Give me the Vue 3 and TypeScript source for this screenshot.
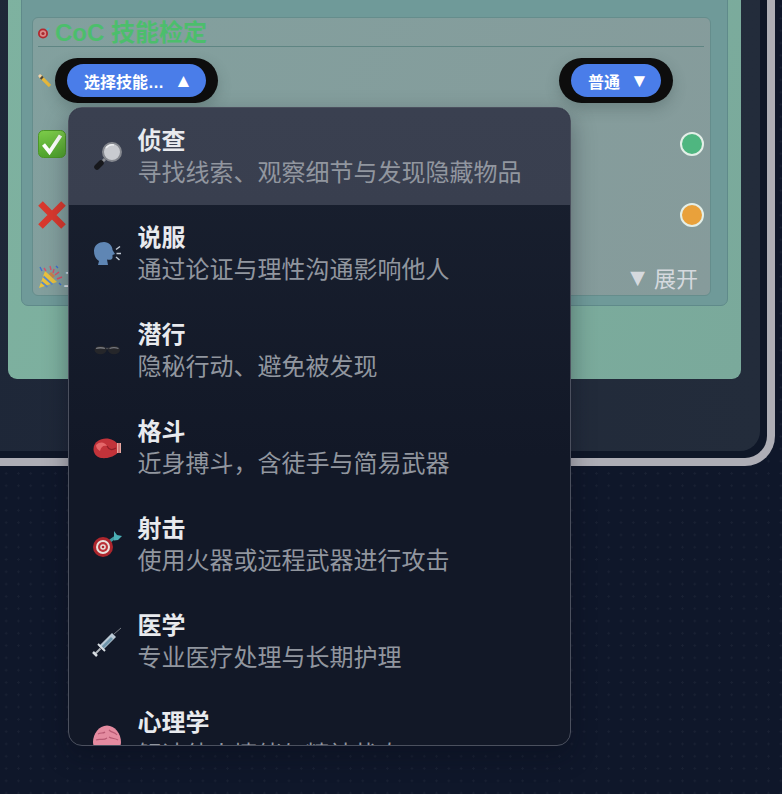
<script setup lang="ts">
interface Skill {
  key: string;
  name: string;
  desc: string;
}

// Skill list shown in the open dropdown
const skills: Skill[] = [
  { key: 'search', name: '侦查', desc: '寻找线索、观察细节与发现隐藏物品' },
  { key: 'talk', name: '说服', desc: '通过论证与理性沟通影响他人' },
  { key: 'stealth', name: '潜行', desc: '隐秘行动、避免被发现' },
  { key: 'fight', name: '格斗', desc: '近身搏斗，含徒手与简易武器' },
  { key: 'shoot', name: '射击', desc: '使用火器或远程武器进行攻击' },
  { key: 'medic', name: '医学', desc: '专业医疗处理与长期护理' },
  { key: 'mind', name: '心理学', desc: '解读他人情绪与精神状态' },
];

const activeKey = 'search';
</script>

<template>
  <div class="page">
    <div class="frame">
      <div class="panel">
        <div class="card">
          <div class="well">
            <section class="check-box">
              <h2 class="title-row">
                <svg class="title-icon" viewBox="0 0 12 14">
                  <path d="M5 8.500L11 3" stroke="#58b4c4" stroke-width="1.600" />
                  <circle cx="5" cy="8.500" r="5" fill="#b3282f" />
                  <circle cx="5" cy="8.500" r="3.200" fill="#d98a88" />
                  <circle cx="5" cy="8.500" r="1.600" fill="#a82a30" />
                </svg>
                <span>CoC 技能检定</span>
              </h2>

              <div class="select-row">
                <svg class="pencil" viewBox="0 0 13 13">
                  <path d="M2 2L12 12" stroke="#e9b93a" stroke-width="3.200" />
                  <path d="M1 1L3 3" stroke="#f0d2ad" stroke-width="3" />
                  <path d="M3 3L4.500 4.500" stroke="#4a4640" stroke-width="3.200" />
                </svg>
                <div class="select-wrap">
                  <div class="pill-ring">
                    <button class="pill pill-skill">
                      <span>选择技能…</span>
                      <span class="arrow">▲</span>
                    </button>
                  </div>

                  <div class="dropdown">
                    <div
                      v-for="skill in skills"
                      :key="skill.key"
                      class="option"
                      :class="{ active: skill.key === activeKey }"
                    >
                      <svg class="option-icon" viewBox="0 0 30 30">
                        <template v-if="skill.key === 'search'">
                          <path d="M13 17L8 22" stroke="#8c8f95" stroke-width="3" />
                          <path d="M9 21L5 25" stroke="#17181c" stroke-width="5.500" stroke-linecap="round" />
                          <circle cx="20" cy="10" r="9" fill="#c9cbd0" stroke="#85888f" stroke-width="2" />
                          <path d="M14 6a8 8 0 0 1 8-3" fill="none" stroke="#eceef0" stroke-width="1.500" />
                        </template>
                        <template v-else-if="skill.key === 'talk'">
                          <path d="M2 12C2 6 7 3 12 3C17 3 20.500 7 20.500 11L23 15L20.500 16L20.500 19C20 21 17 21 15 20.500L16 26H6L7 22C4 20 2 17 2 12Z" fill="#5f86b4" />
                          <path d="M24 10.500L28 7.500M24.500 14.500L29 14.500M24 18L27.500 21" stroke="#bfc7d2" stroke-width="1.500" />
                        </template>
                        <template v-else-if="skill.key === 'stealth'">
                          <path d="M12 12.500H19" stroke="#4a4b50" stroke-width="1.500" />
                          <ellipse cx="8.500" cy="14" rx="6" ry="4.200" fill="#25262a" />
                          <ellipse cx="22" cy="14" rx="6" ry="4.200" fill="#25262a" />
                          <path d="M4 12.500C6 11.500 11 11.500 13 12.500M17.500 12.500C20 11.500 24 11.500 26.500 12.500" fill="none" stroke="#77797f" stroke-width="1.300" />
                        </template>
                        <template v-else-if="skill.key === 'fight'">
                          <path d="M1.500 16C1.500 9 8 5.500 14 5.500C19 5.500 24 8 25.500 11L25.500 20C20 25 14 25.500 9 25C4 24 1.500 20 1.500 16Z" fill="#c2333a" />
                          <path d="M4 12C8 8 13 9 15 13C11 12 9 14 8 18C6 17 4 15 4 12Z" fill="#e5686a" />
                          <path d="M15 13C17 17 20 17.500 24 15" fill="none" stroke="#8e1f27" stroke-width="1.200" />
                          <rect x="25" y="10" width="4" height="10" fill="#e8a7a0" />
                          <path d="M27 10V20" stroke="#b9494c" stroke-width="1" />
                        </template>
                        <template v-else-if="skill.key === 'shoot'">
                          <path d="M11 16L25 6" stroke="#3f9aa0" stroke-width="3" />
                          <path d="M22 1L25 5L30 6L26 10L22 10.500Z" fill="#4bb0b6" />
                          <circle cx="11" cy="17" r="10" fill="#ad262d" />
                          <circle cx="11" cy="17" r="7" fill="#e9e2dc" />
                          <circle cx="11" cy="17" r="5" fill="#bc3339" />
                          <circle cx="11" cy="17" r="2.800" fill="#e9e2dc" />
                          <circle cx="11" cy="17" r="1.300" fill="#ad262d" />
                        </template>
                        <template v-else-if="skill.key === 'medic'">
                          <path d="M22 7L29 1" stroke="#777c84" stroke-width="1" />
                          <path d="M7 19L20 6L24 10L11 23Z" fill="#b9c8d4" />
                          <path d="M9 20L19 10L21 12L11 22Z" fill="#6f95ab" />
                          <path d="M6 17L13 24" stroke="#d7dde2" stroke-width="2" />
                          <path d="M8.500 21.500L3 27" stroke="#aeb4ba" stroke-width="2" />
                          <path d="M1 25L5 29" stroke="#d7dde2" stroke-width="2.500" />
                        </template>
                        <template v-else>
                          <path d="M1 18C1 10 7 1.500 15 1.500C23 1.500 29 10 29 18C29 25 23 28 15 28C7 28 1 25 1 18Z" fill="#e48ba0" />
                          <path d="M6 10C9 8 11 10 13 8M17 6C20 9 23 8 25 11M4 16C8 14 11 17 15 14M17 13C20 15 23 14 26 16" fill="none" stroke="#b95a74" stroke-width="1.200" />
                        </template>
                      </svg>
                      <div class="option-text">
                        <div class="option-name">{{ skill.name }}</div>
                        <div class="option-desc">{{ skill.desc }}</div>
                      </div>
                    </div>
                  </div>
                </div>

                <div class="pill-ring level-ring">
                  <button class="pill pill-level">
                    <span>普通</span>
                    <span class="arrow">▼</span>
                  </button>
                </div>
              </div>

              <div class="result-row first">
                <svg class="result-icon" viewBox="0 0 28 28">
                  <defs>
                    <linearGradient id="check-fill" x1="0" y1="0" x2="0" y2="1">
                      <stop offset="0" stop-color="#7ccb4a" />
                      <stop offset="1" stop-color="#4fa32c" />
                    </linearGradient>
                  </defs>
                  <rect x="0.500" y="0.500" width="27" height="27" rx="5" fill="url(#check-fill)" stroke="#4c9628" />
                  <path d="M5.500 14.500L11.500 22L22.500 5.500" fill="none" stroke="#fff" stroke-width="3.800" />
                </svg>
                <span class="dot dot-green"></span>
              </div>

              <div class="result-row second">
                <svg class="result-icon" viewBox="0 0 28 28">
                  <path d="M2.500 2.500L25.500 25.500M25.500 2.500L2.500 25.500" stroke="#d9392e" stroke-width="6.500" />
                </svg>
                <span class="dot dot-orange"></span>
              </div>

              <div class="footer-row">
                <svg class="popper" viewBox="0 0 25 24">
                  <path d="M1 23L7 6L19 17Z" fill="#e9c23e" />
                  <path d="M3.500 17L9.500 22M5.500 11.500L14.500 19.500" stroke="#5a8ac8" stroke-width="1.700" />
                  <path d="M12 8L16 12" stroke="#c9824a" stroke-width="3" />
                  <path d="M6 3L8 6M12 1L13 5M16 4L15 8M21 7L17 10M24 12L19 14" stroke="#d8506a" stroke-width="1.400" />
                  <path d="M2 2L4 6M18 1L20 3M21 18L23 20" stroke="#3c6fd0" stroke-width="1.400" />
                </svg>
                <span class="footer-note">二</span>
                <span class="expand"><span class="expand-arrow">▼</span><span>展开</span></span>
              </div>
            </section>
          </div>
        </div>
      </div>
    </div>
  </div>
</template>

<style scoped>
.page {
  width: 782px;
  height: 794px;
  overflow: hidden;
  background-color: #0f172a;
  background-image: radial-gradient(rgba(255, 255, 255, 0.045) 1px, transparent 1.2px);
  background-size: 12.3px 12.3px;
  font-family: "Liberation Sans", "Noto Sans CJK SC", sans-serif;
}
.frame {
  box-sizing: border-box;
  width: 815px;
  margin: -40px 0 0 -40px;
  padding: 0 7px 7px 0;
  background: #0f1728;
  border: solid #aeaeb6;
  border-width: 0 8px 8px 8px;
  border-radius: 0 0 30px 30px;
}
.panel {
  padding: 0 19px 72px 40px;
  background: linear-gradient(90deg, #1e2738, #232c3b);
  border-radius: 0 0 20px 20px;
}
.card {
  padding: 0 13px 73px;
  background: linear-gradient(120deg, #7eb2a0, #7aa99b);
  border-radius: 0 0 9px 9px;
}
.well {
  padding: 56px 16px 9px 10px;
  background: #6f9a99;
  border: 1px solid #5f8a8a;
  border-radius: 0 0 7px 7px;
}
.check-box {
  padding: 0 6px 6px 5px;
  background: linear-gradient(120deg, #82a09e, #869b9b);
  border: 1px solid #658d8c;
  border-radius: 6px;
}
.title-row {
  display: flex;
  align-items: center;
  gap: 5px;
  height: 28px;
  margin: 0;
  border-bottom: 1px solid #5f8583;
  color: #4cbe6c;
  font-size: 24px;
  font-weight: 700;
  line-height: 26px;
}
.title-row span {
  margin-top: 1px;
}
.title-icon {
  width: 12px;
  height: 14px;
}
.select-row {
  display: flex;
  align-items: center;
  margin-top: 11px;
}
.pencil {
  width: 13px;
  height: 13px;
  margin-right: 4px;
}
.select-wrap {
  position: relative;
}
.pill-ring {
  display: flex;
  padding: 6px 12px;
  background: #0d0d0d;
  border-radius: 23px;
  box-shadow: 0 6px 14px rgba(40, 60, 60, 0.25);
}
.level-ring {
  margin-left: auto;
  margin-right: 31px;
}
.pill {
  display: flex;
  align-items: center;
  height: 33px;
  padding: 0;
  border: 0;
  border-radius: 17px;
  background: #4a7de9;
  color: #fff;
  font-family: inherit;
  font-size: 16px;
  font-weight: 700;
}
.pill-skill {
  width: 139px;
  padding-left: 17px;
  gap: 10px;
}
.pill-level {
  width: 90px;
  padding-left: 17px;
  gap: 10px;
}
.arrow {
  font-size: 19px;
  line-height: 1;
}
.dropdown {
  position: absolute;
  z-index: 5;
  top: 49px;
  left: 13px;
  box-sizing: border-box;
  width: 503px;
  height: 639px;
  overflow: hidden;
  background: linear-gradient(180deg, #1a2130, #121827 55%);
  border: 1.5px solid #4b505e;
  border-radius: 14px;
  box-shadow: 0 10px 24px rgba(8, 12, 22, 0.35);
}
.option {
  display: flex;
  align-items: center;
  gap: 16px;
  box-sizing: border-box;
  height: 97px;
  padding-left: 22.500px;
}
.option.active {
  background: linear-gradient(180deg, #3a4050, #393f4f);
}
.option-icon {
  flex: none;
  width: 30px;
  height: 30px;
}
.option-name {
  color: #e8eaee;
  font-size: 24px;
  font-weight: 700;
  line-height: 32px;
}
.option-desc {
  color: #91969f;
  font-size: 24px;
  line-height: 32px;
  white-space: nowrap;
}
.result-row {
  display: flex;
  align-items: center;
  justify-content: space-between;
  height: 28px;
}
.result-row.first {
  margin-top: 27px;
}
.result-row.second {
  margin-top: 43px;
}
.result-icon {
  width: 28px;
  height: 28px;
}
.dot {
  box-sizing: border-box;
  width: 24px;
  height: 24px;
  border: 2px solid #e4efe8;
  border-radius: 50%;
}
.dot-green {
  background: #4fb680;
}
.dot-orange {
  background: #e9a13b;
}
.footer-row {
  display: flex;
  align-items: center;
  height: 24px;
  margin-top: 36px;
}
.popper {
  width: 25px;
  height: 24px;
}
.footer-note {
  color: #e5e7eb;
  font-size: 22px;
}
.expand {
  display: flex;
  align-items: center;
  gap: 4px;
  margin-left: auto;
  margin-right: 6px;
  color: #d5d9de;
  font-size: 22px;
}
.expand-arrow {
  font-size: 25px;
  line-height: 1;
}
</style>
